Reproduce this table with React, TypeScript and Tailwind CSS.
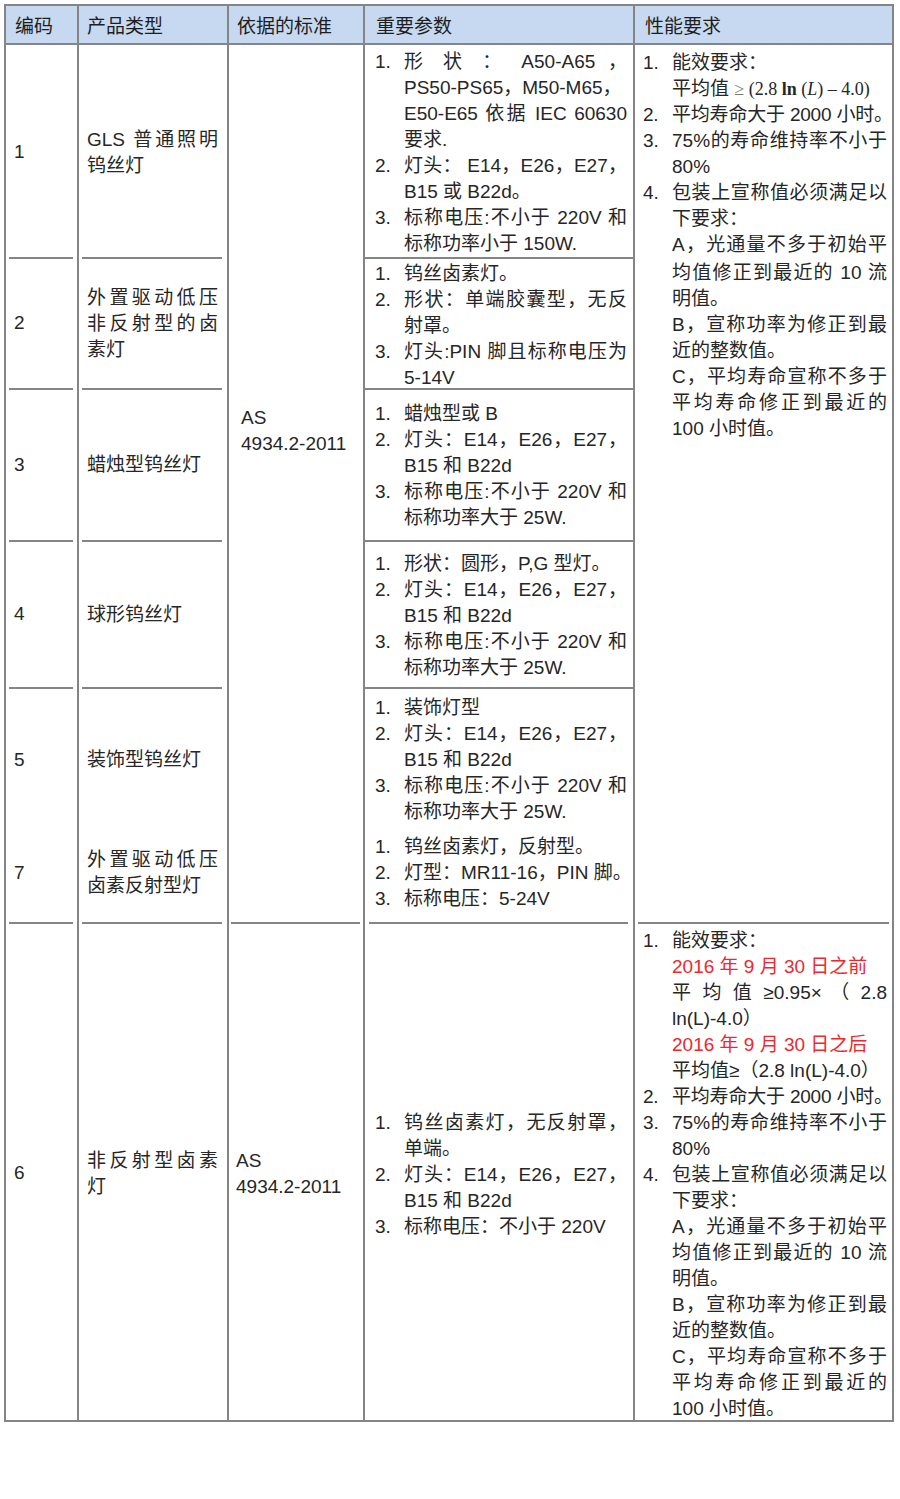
import type { ReactNode } from 'react';
import clsx from 'clsx';

type Line = { n?: string; t: ReactNode; j?: boolean; red?: boolean; cls?: string };

const LINE = 'bg-[#858585]';

function Lines({ lines, w, num = true }: { lines: Line[]; w: string; num?: boolean }) {
    return (
        <div className="flex flex-col">
            {lines.map((l, i) => (
                <div key={i} className={clsx('flex h-[26px] leading-[26px]', l.cls)}>
                    {num && <div className="w-[29px] shrink-0">{l.n}</div>}
                    <div
                        className={clsx(
                            w,
                            'whitespace-nowrap',
                            l.j && 'text-justify [text-align-last:justify]',
                            l.red && 'text-[#f2262b]'
                        )}
                    >
                        {l.t}
                    </div>
                </div>
            ))}
        </div>
    );
}

function Cell({
    left = true,
    sep,
    className,
    inner,
    children,
}: {
    left?: boolean;
    sep?: string;
    className?: string;
    inner?: string;
    children?: ReactNode;
}) {
    return (
        <div className={clsx('flex min-h-0 flex-col', left && 'border-l-2 border-[#858585]', className)}>
            {sep !== undefined && <div className={clsx('h-[2px] shrink-0', LINE, sep)} />}
            <div className={clsx('flex flex-1 flex-col', inner)}>{children}</div>
        </div>
    );
}

// column 4 text blocks
const params: Line[][] = [
    [
        { n: '1.', t: '形 状 ： A50-A65 ，', j: true },
        { t: 'PS50-PS65，M50-M65，' },
        { t: 'E50-E65 依据 IEC 60630', j: true },
        { t: '要求.' },
        { n: '2.', t: '灯头： E14，E26，E27，', j: true },
        { t: 'B15 或 B22d。' },
        { n: '3.', t: '标称电压:不小于 220V 和', j: true },
        { t: '标称功率小于 150W.' },
    ],
    [
        { n: '1.', t: '钨丝卤素灯。' },
        { n: '2.', t: '形状：单端胶囊型，无反', j: true },
        { t: '射罩。' },
        { n: '3.', t: '灯头:PIN 脚且标称电压为', j: true },
        { t: '5-14V' },
    ],
    [
        { n: '1.', t: '蜡烛型或 B' },
        { n: '2.', t: '灯头：E14，E26，E27，', j: true },
        { t: 'B15 和 B22d' },
        { n: '3.', t: '标称电压:不小于 220V 和', j: true },
        { t: '标称功率大于 25W.' },
    ],
    [
        { n: '1.', t: '形状：圆形，P,G 型灯。' },
        { n: '2.', t: '灯头：E14，E26，E27，', j: true },
        { t: 'B15 和 B22d' },
        { n: '3.', t: '标称电压:不小于 220V 和', j: true },
        { t: '标称功率大于 25W.' },
    ],
];

const params5: Line[] = [
    { n: '1.', t: '装饰灯型' },
    { n: '2.', t: '灯头：E14，E26，E27，', j: true },
    { t: 'B15 和 B22d' },
    { n: '3.', t: '标称电压:不小于 220V 和', j: true },
    { t: '标称功率大于 25W.' },
];

const params7: Line[] = [
    { n: '1.', t: '钨丝卤素灯，反射型。' },
    { n: '2.', t: '灯型：MR11-16，PIN 脚。' },
    { n: '3.', t: '标称电压：5-24V' },
];

const params6: Line[] = [
    { n: '1.', t: '钨丝卤素灯，无反射罩，', j: true },
    { t: '单端。' },
    { n: '2.', t: '灯头：E14，E26，E27，', j: true },
    { t: 'B15 和 B22d' },
    { n: '3.', t: '标称电压：不小于 220V' },
];

const packLines: Line[] = [
    { n: '2.', t: '平均寿命大于 2000 小时。', cls: 'tracking-[-0.2px]' },
    { n: '3.', t: '75%的寿命维持率不小于', j: true },
    { t: '80%' },
    { n: '4.', t: '包装上宣称值必须满足以', j: true },
    { t: '下要求：' },
    { t: 'A，光通量不多于初始平', j: true },
    { t: '均值修正到最近的 10 流', j: true },
    { t: '明值。' },
    { t: 'B，宣称功率为修正到最', j: true },
    { t: '近的整数值。' },
    { t: 'C，平均寿命宣称不多于', j: true },
    { t: '平均寿命修正到最近的', j: true },
    { t: '100 小时值。' },
];

const perfA: Line[] = [
    { n: '1.', t: '能效要求：' },
    {
        t: (
            <>
                平均值{' '}
                <span className="font-['Liberation_Serif'] text-[18px]">
                    <span className="text-[#777]">≥</span> (2.8 <b>ln</b> (<i>L</i>) – 4.0)
                </span>
            </>
        ),
    },
    ...packLines.map((l, i) => (i === 6 ? { ...l, cls: 'mt-[2px]' } : l)),
];

const perf6: Line[] = [
    { n: '1.', t: '能效要求：' },
    { t: '2016 年 9 月 30 日之前', red: true },
    { t: '平 均 值 ≥0.95× （ 2.8', j: true },
    { t: 'ln(L)-4.0）' },
    { t: '2016 年 9 月 30 日之后', red: true },
    { t: '平均值≥（2.8 ln(L)-4.0）' },
    ...packLines,
];

const types: Line[][] = [
    [{ t: 'GLS 普通照明', j: true }, { t: '钨丝灯' }],
    [{ t: '外置驱动低压', j: true }, { t: '非反射型的卤', j: true }, { t: '素灯' }],
    [{ t: '蜡烛型钨丝灯' }],
    [{ t: '球形钨丝灯' }],
];

export default function App() {
    return (
        <div className="min-h-[1499px] bg-white pl-[4px] pt-[4px] font-['Liberation_Sans','Noto_Sans_CJK_SC',sans-serif] text-[19px] text-[#262626]">
            <div className="grid w-[890px] grid-cols-[71px_150px_136px_270px_259px] grid-rows-[39px_212px_131px_152px_147px_235px_498px] border-2 border-[#858585]">
                {/* header */}
                {['编码', '产品类型', '依据的标准', '重要参数', '性能要求'].map((h, i) => (
                    <div
                        key={h}
                        className={clsx(
                            'flex items-center border-b-2 border-[#858585] bg-[#c6d9f1] pt-[5px] text-[#1e1e1e]',
                            i > 0 && 'border-l-2',
                            ['pl-[9px]', 'pl-[8px]', 'pl-[8px]', 'pl-[11px]', 'pl-[10px]'][i]
                        )}
                    >
                        {h}
                    </div>
                ))}

                {/* rows 1-4 */}
                {types.map((tl, r) => (
                    <div key={r} className="contents">
                        <Cell
                            left={false}
                            sep={r > 0 ? 'ml-[3px] mr-[4px]' : undefined}
                            inner={clsx('justify-center pl-[8px]', r === 0 && 'pt-[2px]')}
                        >
                            {r + 1}
                        </Cell>
                        <Cell
                            sep={r > 0 ? 'ml-[3px] mr-[5px]' : undefined}
                            inner={clsx('justify-center pl-[8px]', r === 0 && 'pt-[4px]')}
                        >
                            <Lines lines={tl} w="w-[131px]" num={false} />
                        </Cell>
                        {r === 0 && (
                            <Cell className="row-span-5" inner="pl-[12px] pt-[360px] leading-[26px]">
                                <div>AS</div>
                                <div>4934.2-2011</div>
                            </Cell>
                        )}
                        <Cell
                            sep={r > 0 ? '' : undefined}
                            inner={clsx('justify-center pl-[10px]', r === 0 ? 'pt-[3px]' : 'pt-[2px]')}
                        >
                            <Lines lines={params[r]} w="w-[223px]" />
                        </Cell>
                        {r === 0 && (
                            <Cell className="row-span-5" inner="pl-[8px] pt-[5px]">
                                <Lines lines={perfA} w="w-[215px]" />
                            </Cell>
                        )}
                    </div>
                ))}

                {/* rows 5 & 7 */}
                <Cell left={false} sep="ml-[3px] mr-[4px]" inner="pl-[8px] pt-[6px] pb-[10px] gap-[9px]">
                    <div className="flex h-[130px] flex-col justify-center">5</div>
                    <div className="flex h-[78px] flex-col justify-center">7</div>
                </Cell>
                <Cell sep="ml-[3px] mr-[5px]" inner="pl-[8px] pt-[6px] pb-[10px] gap-[9px]">
                    <div className="flex h-[130px] flex-col justify-center">
                        <Lines lines={[{ t: '装饰型钨丝灯' }]} w="w-[131px]" num={false} />
                    </div>
                    <div className="flex h-[78px] flex-col justify-center">
                        <Lines lines={[{ t: '外置驱动低压', j: true }, { t: '卤素反射型灯' }]} w="w-[131px]" num={false} />
                    </div>
                </Cell>
                <Cell sep="" inner="pl-[10px] pt-[6px] pb-[10px] gap-[9px]">
                    <div className="flex h-[130px] flex-col justify-center">
                        <Lines lines={params5} w="w-[223px]" />
                    </div>
                    <div className="flex h-[78px] flex-col justify-center">
                        <Lines lines={params7} w="w-[223px]" />
                    </div>
                </Cell>

                {/* row 6 */}
                <Cell left={false} sep="ml-[3px] mr-[4px]" inner="justify-center pl-[8px] pt-[2px]">
                    6
                </Cell>
                <Cell sep="ml-[3px] mr-[5px]" inner="justify-center pl-[8px] pt-[4px]">
                    <Lines lines={[{ t: '非反射型卤素', j: true }, { t: '灯' }]} w="w-[131px]" num={false} />
                </Cell>
                <Cell sep="ml-[2px] mr-[3px]" inner="justify-center pl-[7px] pt-[4px] leading-[26px]">
                    <div>AS</div>
                    <div>4934.2-2011</div>
                </Cell>
                <Cell sep="ml-[4px] mr-[5px]" inner="justify-center pl-[10px] pt-[6px]">
                    <Lines lines={params6} w="w-[223px]" />
                </Cell>
                <Cell sep="ml-[3px] mr-[3px]" inner="justify-center pl-[8px] pt-[4px]">
                    <Lines lines={perf6} w="w-[215px]" />
                </Cell>
            </div>
        </div>
    );
}
